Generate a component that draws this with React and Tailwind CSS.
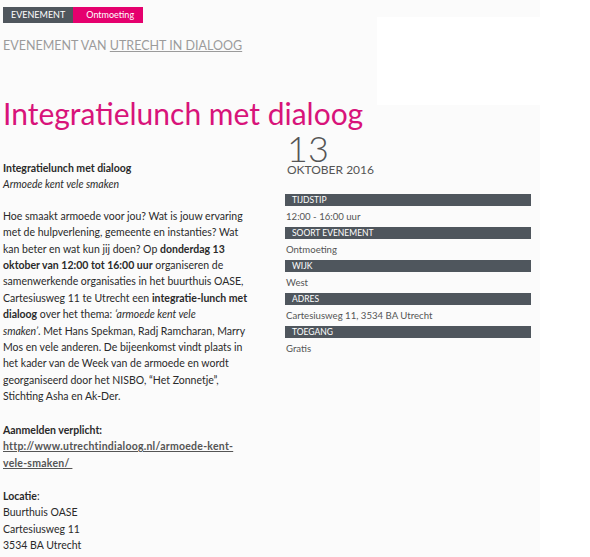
const details = [
    { label: "Tijdstip", value: "12:00 - 16:00 uur" },
    { label: "Soort evenement", value: "Ontmoeting" },
    { label: "Wijk", value: "West" },
    { label: "Adres", value: "Cartesiusweg 11, 3534 BA Utrecht" },
    { label: "Toegang", value: "Gratis" },
];

const DetailBlock = ({ label, value }) => (
    <div className="flex flex-col">
        <div className="bg-[#4f565d] h-[12px] pl-[7px] text-[8.5px] leading-[12px] uppercase text-white">
            {label}
        </div>
        <div className="h-[21px] pl-[1px] text-[9.6px] leading-[21px] text-[#555]">
            {value}
        </div>
    </div>
);

const App = () => {
    return (
        <div className="w-[590px] min-h-[557px] bg-white font-['Lato','Noto_Sans',sans-serif]">
            <div className="w-[540px] min-h-[557px] bg-[#fbfbfb] pl-[3px]">
                <div className="flex">
                    <div className="flex flex-col">
                        <div className="flex pt-[7px] leading-[16px] text-white">
                            <span className="bg-[#4f565d] px-[8px] text-[9px]">EVENEMENT</span>
                            <span className="bg-[#e5006e] pl-[13px] pr-[9px] text-[9px]">Ontmoeting</span>
                        </div>
                        <div className="mt-[15px] text-[12.5px] leading-[16px] uppercase text-[#9b9b9b]">
                            Evenement van <a href="#" className="underline">Utrecht in dialoog</a>
                        </div>
                    </div>
                    <div className="ml-auto mt-[17px] w-[163px] h-[88px] bg-white"></div>
                </div>

                <h1 className="mt-[-12px] text-[30px] leading-[40px] text-[#d8137a]">
                    Integratielunch met dialoog
                </h1>

                <div className="flex mt-[3px]">
                    <div className="w-[250px] pt-[24px] text-[10.5px] leading-[16.4px] text-[#2a2a2a]">
                        <p>
                            <strong>Integratielunch met dialoog</strong>
                            <br />
                            <em>Armoede kent vele smaken</em>
                        </p>
                        <p className="mt-[15px]">
                            Hoe smaakt armoede voor jou? Wat is jouw ervaring met de hulpverlening,
                            gemeente en instanties? Wat kan beter en wat kun jij doen? Op{" "}
                            <strong>donderdag 13 oktober van 12:00 tot 16:00 uur</strong> organiseren de
                            samenwerkende organisaties in het buurthuis OASE, Cartesiusweg 11 te Utrecht
                            een <strong>integratie-lunch met dialoog</strong> over het thema:{" "}
                            <em>
                                ‘armoede kent vele
                                <br />
                                smaken’
                            </em>
                            . Met Hans Spekman, Radj Ramcharan, Marry Mos en vele anderen. De
                            bijeenkomst vindt plaats in het kader van de Week van de armoede en wordt
                            georganiseerd door het NISBO, “Het Zonnetje”, Stichting Asha en Ak-Der.
                        </p>
                        <p className="mt-[17px]">
                            <strong>Aanmelden verplicht:</strong>
                            <br />
                            <a href="#" className="font-bold underline tracking-[0.25px] text-[#555]">
                                http://www.utrechtindialoog.nl/armoede-kent-vele-smaken/&nbsp;
                            </a>
                        </p>
                        <p className="mt-[17px]">
                            <strong>Locatie</strong>:
                            <br />
                            Buurthuis OASE
                            <br />
                            Cartesiusweg 11
                            <br />
                            3534 BA Utrecht
                        </p>
                    </div>

                    <div className="ml-[32px] mt-[-6px] w-[246px] flex flex-col">
                        <div className="text-[36px] leading-[36px] font-light text-[#555] pl-[2px]">13</div>
                        <div className="mt-[-2px] text-[12px] leading-[12px] uppercase text-[#555] pl-[2px]">
                            Oktober 2016
                        </div>
                        <div className="mt-[18px] flex flex-col">
                            {details.map((d) => (
                                <DetailBlock key={d.label} label={d.label} value={d.value} />
                            ))}
                        </div>
                    </div>
                </div>
            </div>
        </div>
    );
};

export default App;
